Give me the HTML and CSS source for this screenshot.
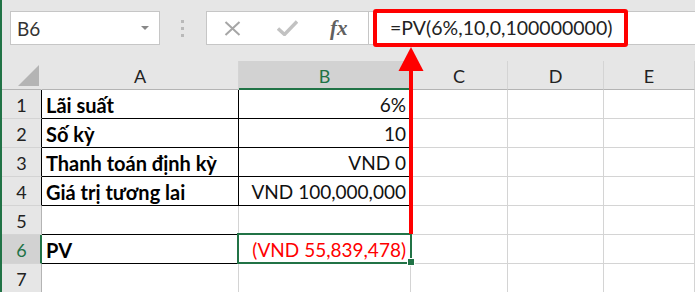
FILE: index.html
```html
<!DOCTYPE html>
<html lang="vi">
<head>
    <meta charset="UTF-8">
    <title>PV</title>
    <link rel="stylesheet" href="styles.css">
</head>
<body>
    <div class="window">
        <div class="toolbar">
            <div class="namebox">
                <span>B6</span>
                <svg class="caret" width="8" height="5" viewBox="0 0 8 5"><path d="M0 0H8L4 4Z" fill="#888"/></svg>
            </div>
            <div class="grip"><i></i><i></i><i></i></div>
            <div class="fbar">
                <div class="fbtns">
                    <svg width="17" height="15" viewBox="0 0 17 15"><path d="M1.5 1L15.5 14M15.5 1L1.5 14" stroke="#a6a6a6" stroke-width="2"/></svg>
                    <svg width="21" height="16" viewBox="0 0 21 16"><path d="M1 8.5L7.5 14.5L20 1.5" stroke="#c2c2c2" stroke-width="3.4" fill="none"/></svg>
                    <span class="fx">fx</span>
                </div>
                <div class="finput">=PV(6%,10,0,100000000)</div>
            </div>
        </div>

        <div class="sheet">
            <div class="corner"><div class="tri"></div></div>
            <div class="ch">A</div>
            <div class="ch on">B</div>
            <div class="ch">C</div>
            <div class="ch">D</div>
            <div class="ch">E</div>

            <div class="rh box">1</div>
            <div class="c bx lbl">Lãi suất</div>
            <div class="c bx num">6%</div>
            <div class="c"></div><div class="c"></div><div class="c"></div>

            <div class="rh box">2</div>
            <div class="c bx lbl">Số kỳ</div>
            <div class="c bx num">10</div>
            <div class="c"></div><div class="c"></div><div class="c"></div>

            <div class="rh box">3</div>
            <div class="c bx lbl">Thanh toán định kỳ</div>
            <div class="c bx num">VND 0</div>
            <div class="c"></div><div class="c"></div><div class="c"></div>

            <div class="rh box">4</div>
            <div class="c bx lbl">Giá trị tương lai</div>
            <div class="c bx num">VND 100,000,000</div>
            <div class="c"></div><div class="c"></div><div class="c"></div>

            <div class="rh">5</div>
            <div class="c under"></div>
            <div class="c under"></div>
            <div class="c"></div><div class="c"></div><div class="c"></div>

            <div class="rh on">6</div>
            <div class="c bx lbl">PV</div>
            <div class="c bx num neg sel">(VND 55,839,478)</div>
            <div class="c"></div><div class="c"></div><div class="c"></div>

            <div class="rh">7</div>
            <div class="c"></div><div class="c"></div><div class="c"></div><div class="c"></div><div class="c"></div>
        </div>

        <!-- chu thich mau do -->
        <div class="callout"></div>
        <svg class="arrow" width="695" height="292" viewBox="0 0 695 292">
            <rect x="409" y="69" width="4" height="165" fill="#ff0000"/>
            <path d="M411 47L398.5 71H423.5Z" fill="#ff0000"/>
        </svg>
    </div>
</body>
</html>
```

FILE: styles.css
```css
body{
    margin: 0;
    font-family: Lato, "Open Sans", sans-serif;
    color: #1e1e1e;
}
.window{
    position: relative;
    width: 693px;
    height: 292px;
    overflow: hidden;
    border-left: 2px solid #217346;
    background: #fff;
}
.toolbar{
    display: flex;
    align-items: flex-start;
    height: 61px;
    box-sizing: border-box;
    padding: 11px 0 0 8px;
    background: #e6e6e6;
}
.namebox{
    width: 150px;
    height: 34px;
    box-sizing: border-box;
    border: 1px solid #c6c6c6;
    background: #fff;
    display: flex;
    align-items: center;
    justify-content: space-between;
    padding: 0 10px 0 6px;
    font-size: 19px;
    color: #333;
}
.grip{
    display: flex;
    flex-direction: column;
    gap: 4px;
    margin: 9px 22px 0 21px;
}
.grip i{
    width: 3px;
    height: 3px;
    background: #b9b9b9;
}
.fbar{
    flex: 1;
    display: flex;
    height: 34px;
}
.fbtns{
    width: 163px;
    box-sizing: border-box;
    border: 1px solid #c6c6c6;
    background: #fff;
    display: flex;
    align-items: center;
    padding-left: 17px;
    gap: 36px;
}
.fx{
    font-family: "Liberation Serif", serif;
    font-style: italic;
    font-weight: bold;
    font-size: 21px;
    color: #606060;
    margin-left: -4px;
}
.finput{
    flex: 1;
    box-sizing: border-box;
    border-top: 1px solid #c6c6c6;
    border-bottom: 1px solid #c6c6c6;
    background: #fff;
    padding-left: 21px;
    line-height: 31px;
    font-size: 19.5px;
    color: #222;
}
.sheet{
    display: grid;
    grid-template-columns: 40px 197px 172px 97px 96px 1fr;
    grid-template-rows: repeat(8, 29px);
}
.sheet > div{
    box-sizing: border-box;
    border-right: 1px solid #d4d4d4;
    border-bottom: 1px solid #d4d4d4;
}
.corner{
    background: #e6e6e6;
    display: flex;
    justify-content: flex-end;
    align-items: flex-end;
    padding: 0 2px 3px 0;
}
.sheet > .corner{
    border-right-color: #e6e6e6;
    border-bottom-color: #b4b4b4;
}
.tri{
    width: 21px;
    height: 21px;
    background: #b4b4b4;
    clip-path: polygon(100% 0, 100% 100%, 0 100%);
}
.sheet > .ch{
    background: #e6e6e6;
    border-bottom-color: #b4b4b4;
    text-align: center;
    font-size: 18px;
    line-height: 30px;
    color: #222;
}
.sheet > .ch.on{
    background: #d2d2d2;
    border-bottom: 2px solid #217346;
    color: #217346;
}
.sheet > .rh{
    background: #e6e6e6;
    border-right-color: #b4b4b4;
    border-bottom-color: #d4d4d4;
    text-align: center;
    font-size: 18px;
    line-height: 30px;
    color: #222;
}
.sheet > .rh.box{
    border-right-color: #000;
}
.sheet > .rh.on{
    background: #d2d2d2;
    border-right: 2px solid #217346;
    color: #217346;
    padding-left: 1px;
}
.c{
    font-size: 19px;
    line-height: 30px;
    padding: 0 4px;
    white-space: nowrap;
}
.sheet > .bx{
    border-right-color: #000;
    border-bottom-color: #000;
}
.sheet > .under{
    border-bottom-color: #000;
}
.lbl{
    font-weight: bold;
    font-size: 20px;
    color: #000;
}
.num{
    text-align: right;
    color: #111;
}
.neg{
    color: #ff0000;
}
.sel{
    position: relative;
}
.sel::after{
    content: "";
    position: absolute;
    left: -2px;
    top: -2px;
    right: -2px;
    bottom: -1px;
    border: 2px solid #217346;
}
.sel::before{
    content: "";
    position: absolute;
    right: -5px;
    bottom: -3px;
    width: 6px;
    height: 6px;
    background: #217346;
    border: 1px solid #fff;
    z-index: 1;
}
.callout{
    position: absolute;
    left: 371px;
    top: 9px;
    width: 255px;
    height: 38px;
    box-sizing: border-box;
    border: 4px solid #ff0000;
    border-radius: 3px;
}
.arrow{
    position: absolute;
    left: -2px;
    top: 0;
}
```
